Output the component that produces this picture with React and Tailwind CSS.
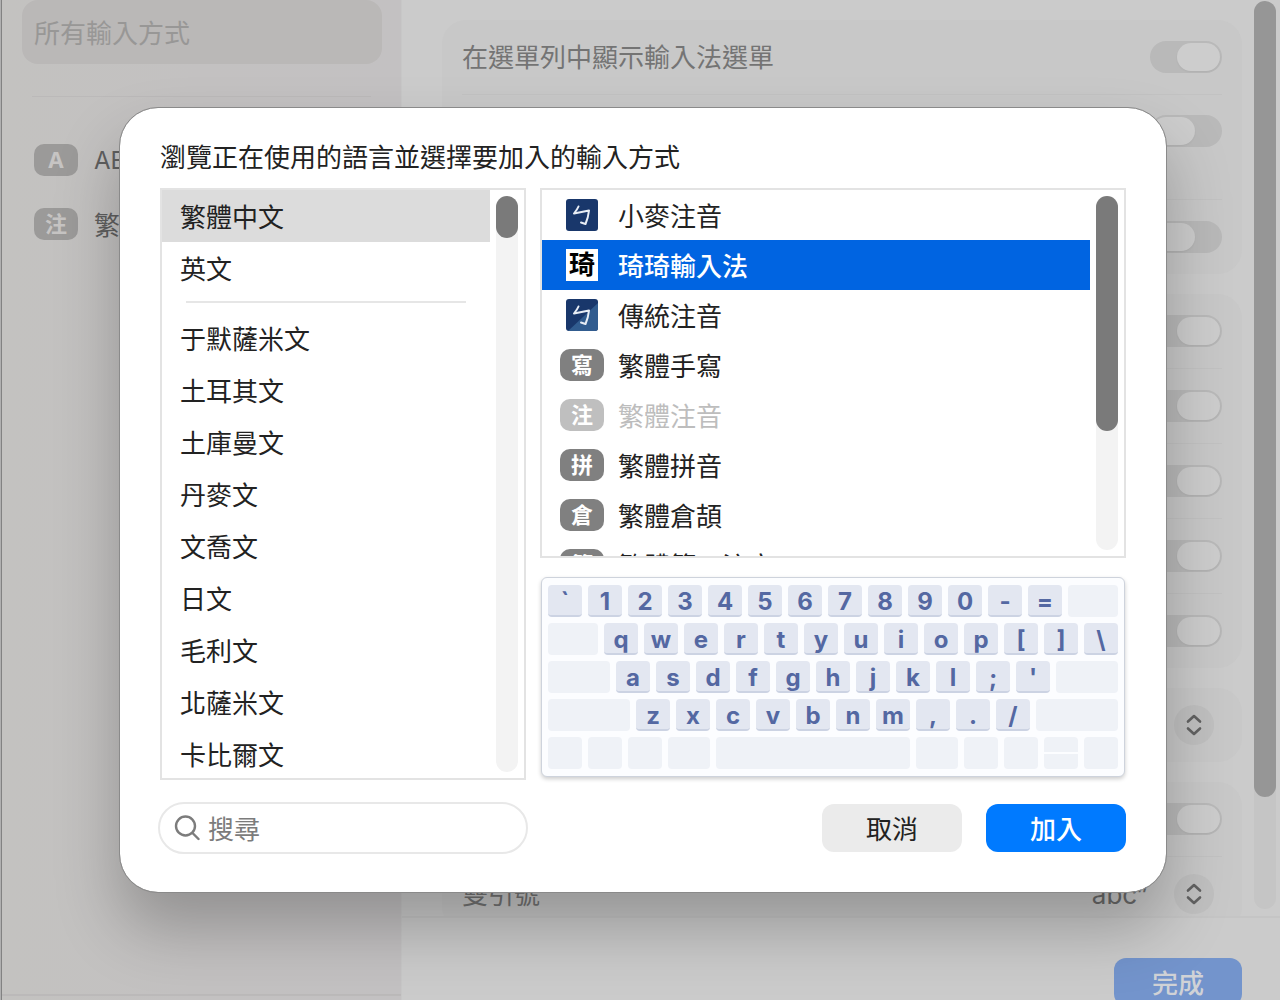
import { useState } from "react";
import clsx from "clsx";

const LANGUAGES = [
  "于默薩米文",
  "土耳其文",
  "土庫曼文",
  "丹麥文",
  "文喬文",
  "日文",
  "毛利文",
  "北薩米文",
  "卡比爾文",
];

const INPUT_METHODS = [
  { name: "小麥注音", icon: "bopomofo" },
  { name: "琦琦輸入法", icon: "kiki" },
  { name: "傳統注音", icon: "bopomofo-plain" },
  { name: "繁體手寫", badge: "寫" },
  { name: "繁體注音", badge: "注", disabled: true },
  { name: "繁體拼音", badge: "拼" },
  { name: "繁體倉頡", badge: "倉" },
  { name: "繁體筆五注音", badge: "筆" },
];

const SettingSwitch = ({ label, defaultChecked = false }) => (
  <input
    type="checkbox"
    role="switch"
    aria-label={label}
    defaultChecked={defaultChecked}
    className="appearance-none shrink-0 w-18 h-8 rounded-full p-0.5 bg-[#b9b9b9] flex before:block before:w-[43px] before:h-7 before:rounded-full before:bg-[#cdcdcd] before:shadow-xs checked:justify-end"
  />
);

const Card = ({ children }) => (
  <div className="rounded-3xl bg-[#c8c8c8] px-5 divide-y divide-[#c2c2c2]">
    {children}
  </div>
);

const Row = ({ label, children }) => (
  <div className="flex items-center justify-between h-[75px] last:h-[74px]">
    <span className="pb-1">{label}</span>
    {children}
  </div>
);

const Stepper = () => (
  <span className="pointer-events-none absolute right-4 top-1/2 -translate-y-1/2 w-10 h-10 rounded-full bg-[#c0c0c0] flex items-center justify-center">
    <svg width="16" height="22" viewBox="0 0 16 22" fill="none" stroke="#626262" strokeWidth="2.6" strokeLinecap="round" strokeLinejoin="round">
      <path d="M2 7.500l6-5.500 6 5.500M2 14.500l6 5.500 6-5.500" />
    </svg>
  </span>
);

const PopUp = ({ label, value }) => (
  <div className="relative -mr-2 w-64">
    <select
      aria-label={label}
      defaultValue={value}
      className="appearance-none w-full h-11 pr-[82px] bg-transparent text-[#6b6b6b] font-['Inter',sans-serif] [text-align-last:right]"
    >
      <option>{value}</option>
    </select>
    <Stepper />
  </div>
);

const Badge = ({ children, className }) => (
  <span
    className={clsx(
      "flex items-center justify-center w-11 h-8 rounded-[10px] text-[22px] leading-7 font-bold shrink-0",
      className
    )}
  >
    {children}
  </span>
);

const MethodIcon = ({ method }) => {
  if (method.badge) {
    return (
      <Badge className={clsx("pb-1 text-white", method.disabled ? "bg-[#bfbfbf]" : "bg-[#808080]")}>
        {method.badge}
      </Badge>
    );
  }

  if (method.icon === "kiki") {
    return (
      <span className="w-8 h-8 bg-white text-black text-[26px] leading-7 font-bold text-center">
        琦
      </span>
    );
  }

  return (
    <svg width="32" height="32" viewBox="0 0 32 32" fill="none">
      <rect width="32" height="32" rx="3" fill="#19376b" />
      {method.icon === "bopomofo-plain" && (
        <path d="M32 4v25a3 3 0 0 1-3 3H2z" fill="#315c8f" />
      )}
      <path
        d="M12.5 7.5C11.5 10 10 12 8 14.5L23 11.5C22.5 16 21.5 20.5 19.5 25L15 23.5"
        stroke="#e8edf5"
        strokeWidth="2"
        strokeLinecap="round"
        strokeLinejoin="round"
      />
    </svg>
  );
};

const ScrollBar = ({ thumb }) => (
  <div className="m-1.5 w-[22px] shrink-0 rounded-full bg-[#f3f3f3]">
    <div className={clsx("rounded-full bg-[#7a7a7a]", thumb)} />
  </div>
);

const Key = ({ children }) => (
  <span className="w-[34px] h-8 rounded-sm bg-[#e3e7f1] border-b-2 border-[#ccd3e3] text-[#5468a2] text-2xl leading-[34px] font-bold text-center font-['Inter',sans-serif]">
    {children}
  </span>
);

const Blank = ({ className = "w-[34px]" }) => (
  <span className={clsx("h-8 rounded-sm bg-[#eff2f7]", className)} />
);

const Keys = ({ chars }) => chars.split("").map((char) => <Key key={char}>{char}</Key>);

const Keyboard = () => (
  <div className="mx-px flex flex-col gap-1.5 rounded-md border border-[#ced3dc] bg-[#fcfdff] px-1.5 py-[7px] shadow-[0_2px_4px_rgba(0,0,0,0.2)]">
    <div className="flex gap-1.5">
      <Keys chars="`1234567890-=" />
      <Blank className="flex-1" />
    </div>
    <div className="flex gap-1.5">
      <Blank className="flex-1" />
      <Keys chars="qwertyuiop[]\" />
    </div>
    <div className="flex gap-1.5">
      <Blank className="flex-1" />
      <Keys chars="asdfghjkl;'" />
      <Blank className="flex-1" />
    </div>
    <div className="flex gap-1.5">
      <Blank className="flex-1" />
      <Keys chars="zxcvbnm,./" />
      <Blank className="flex-1" />
    </div>
    <div className="flex gap-1.5">
      <Blank />
      <Blank />
      <Blank />
      <Blank className="w-[42px]" />
      <Blank className="flex-1" />
      <Blank className="w-[42px]" />
      <Blank />
      <Blank />
      {/* up / down arrows share one key */}
      <span className="flex flex-col gap-0.5 w-[34px] h-8">
        <span className="flex-1 rounded-t-sm bg-[#eff2f7]" />
        <span className="flex-1 rounded-b-sm bg-[#eff2f7]" />
      </span>
      <Blank />
    </div>
  </div>
);

const Sidebar = () => (
  <aside className="w-[399px] shrink-0 flex flex-col bg-linear-to-r from-[#c3c2c0] via-[#c3c1c1] to-[#c3c1c2]">
    <button type="button" className="ml-5 mr-[19px] h-16 rounded-2xl bg-[#bab8b7] px-3 pb-px text-left text-[#989796]">
      所有輸入方式
    </button>
    <hr className="mx-[30px] mt-8 border-[#bbb9b9]" />
    <nav className="mt-[31px] px-8">
      <button type="button" className="flex items-center gap-4 h-16 w-full text-[#5f5f5f]">
        <Badge className="bg-[#9b9a99] text-[#c6c4c3] font-['Inter',sans-serif]">A</Badge>
        <span className="pt-0.5 font-['Inter',sans-serif] text-2xl">ABC</span>
      </button>
      <button type="button" className="flex items-center gap-4 h-16 w-full text-[#5f5f5f]">
        <Badge className="pb-1 bg-[#9b9a99] text-[#c6c4c3]">注</Badge>
        <span className="pb-0.5">繁體注音</span>
      </button>
    </nav>
    <div className="mt-auto h-1.5 border-t-2 border-[#bbb9b9]" />
  </aside>
);

const Settings = () => (
  <main className="flex-1 min-w-0 flex flex-col bg-[#cbcbcb] border-l border-[#c7c7c7]">
    <div className="flex flex-1 min-h-0">
      <div className="flex-1 overflow-hidden pl-10 pr-3 pt-5 flex flex-col gap-5 text-[#747474]">
        <Card>
          <Row label="在選單列中顯示輸入法選單">
            <SettingSwitch label="在選單列中顯示輸入法選單" defaultChecked />
          </Row>
          <div className="flex items-start justify-end h-[105px] pt-5">
            <SettingSwitch label="設定 2" />
          </div>
          <Row>
            <SettingSwitch label="設定 3" />
          </Row>
        </Card>
        <Card>
          {[4, 5, 6, 7, 8].map((n) => (
            <Row key={n}>
              <SettingSwitch label={`設定 ${n}`} defaultChecked />
            </Row>
          ))}
        </Card>
        <Card>
          <Row>
            <PopUp label="設定 9" value="" />
          </Row>
        </Card>
        <Card>
          <Row>
            <SettingSwitch label="設定 10" defaultChecked />
          </Row>
          <Row label="雙引號">
            <PopUp label="雙引號" value="“abc”" />
          </Row>
        </Card>
      </div>
      <div className="w-[22px] mr-1 mt-px mb-[7px] rounded-full bg-[#c5c5c5]">
        <div className="h-[796px] rounded-full bg-[#969696]" />
      </div>
    </div>
    <footer className="flex justify-end h-21 border-t-2 border-[#c5c5c5] px-[38px] pt-10 overflow-hidden">
      <button type="button" className="w-32 h-12 shrink-0 rounded-xl bg-[#7394cc] pb-0.5 text-[#d0d2d6] font-medium">
        完成
      </button>
    </footer>
  </main>
);

const AddInputSourceDialog = () => {
  const [language, setLanguage] = useState("繁體中文");
  const [selected, setSelected] = useState("琦琦輸入法");
  const [query, setQuery] = useState("");

  const languageRow = (name) => (
    <button
      key={name}
      type="button"
      onClick={() => setLanguage(name)}
      className={clsx(
        "block shrink-0 h-13 w-full px-[18px] pb-0.5 text-left",
        name === language && "bg-[#dcdcdc]"
      )}
    >
      {name}
    </button>
  );

  return (
    <div
      role="dialog"
      aria-labelledby="dialog-title"
      className="w-[1046px] rounded-[38px] bg-white text-[#222] pt-7 pb-[38px] outline outline-[#8a8a8a] shadow-[0_36px_64px_rgba(0,0,0,0.25)]"
    >
      <h1 id="dialog-title" className="px-10 leading-10">
        瀏覽正在使用的語言並選擇要加入的輸入方式
      </h1>

      <div className="mt-3 flex gap-3.5 px-10 h-[592px]">
        {/* Languages */}
        <div className="flex w-[366px] border-2 border-[#e3e3e3]">
          <div className="flex-1 flex flex-col overflow-hidden">
            {languageRow("繁體中文")}
            {languageRow("英文")}
            <div className="h-[18px] shrink-0 px-6 pt-[7px]">
              <hr className="border-t-2 border-[#e6e6e6]" />
            </div>
            {LANGUAGES.map(languageRow)}
          </div>
          <ScrollBar thumb="h-[42px]" />
        </div>

        <div className="flex-1 flex flex-col gap-[19px]">
          {/* Input methods */}
          <div className="flex h-[370px] border-2 border-[#e3e3e3]">
            <div className="flex-1 flex flex-col overflow-hidden">
              {INPUT_METHODS.map((method) => (
                <button
                  key={method.name}
                  type="button"
                  disabled={method.disabled}
                  onClick={() => setSelected(method.name)}
                  className={clsx(
                    "flex items-center gap-3.5 shrink-0 h-[50px] w-full px-[18px]",
                    method.disabled && "text-[#bdbdbd]",
                    method.name === selected && "bg-[#0064e1] text-white font-medium"
                  )}
                >
                  <span className="flex justify-center w-11">
                    <MethodIcon method={method} />
                  </span>
                  <span className="pb-0.5">{method.name}</span>
                </button>
              ))}
            </div>
            <ScrollBar thumb="h-[235px]" />
          </div>
          <Keyboard />
        </div>
      </div>

      <div className="mt-[22px] flex items-center gap-6 pl-[38px] pr-10">
        <label className="flex items-center gap-2 w-[370px] h-13 rounded-full border-2 border-[#e8e8e8] px-3.5 mr-auto">
          <svg width="26" height="26" viewBox="0 0 26 26" fill="none" stroke="#7c7c7c" strokeWidth="2.4" strokeLinecap="round">
            <circle cx="11.500" cy="11" r="9.500" />
            <path d="M18.500 18l6 6" />
          </svg>
          <input
            type="search"
            aria-label="搜尋"
            placeholder="搜尋"
            value={query}
            onChange={(e) => setQuery(e.target.value)}
            className="flex-1 min-w-0 h-10 pb-0.5 outline-none placeholder:text-[#7c7c7c]"
          />
        </label>
        <button type="button" className="w-35 h-12 rounded-xl bg-[#ebebeb] pb-0.5">
          取消
        </button>
        <button type="button" className="w-35 h-12 rounded-xl bg-[#007aff] pb-0.5 text-white font-medium">
          加入
        </button>
      </div>
    </div>
  );
};

const App = () => (
  <div
    lang="zh-Hant"
    className="relative h-screen overflow-hidden bg-[#b0b0b0] text-[26px] font-['Noto_Sans_CJK_TC',sans-serif]"
  >
    <div className="ml-px flex h-full border-l border-[#828282]">
      <Sidebar />
      <Settings />
    </div>
    <div className="absolute inset-0 flex items-center justify-center pl-1.5">
      <AddInputSourceDialog />
    </div>
  </div>
);

export default App;
